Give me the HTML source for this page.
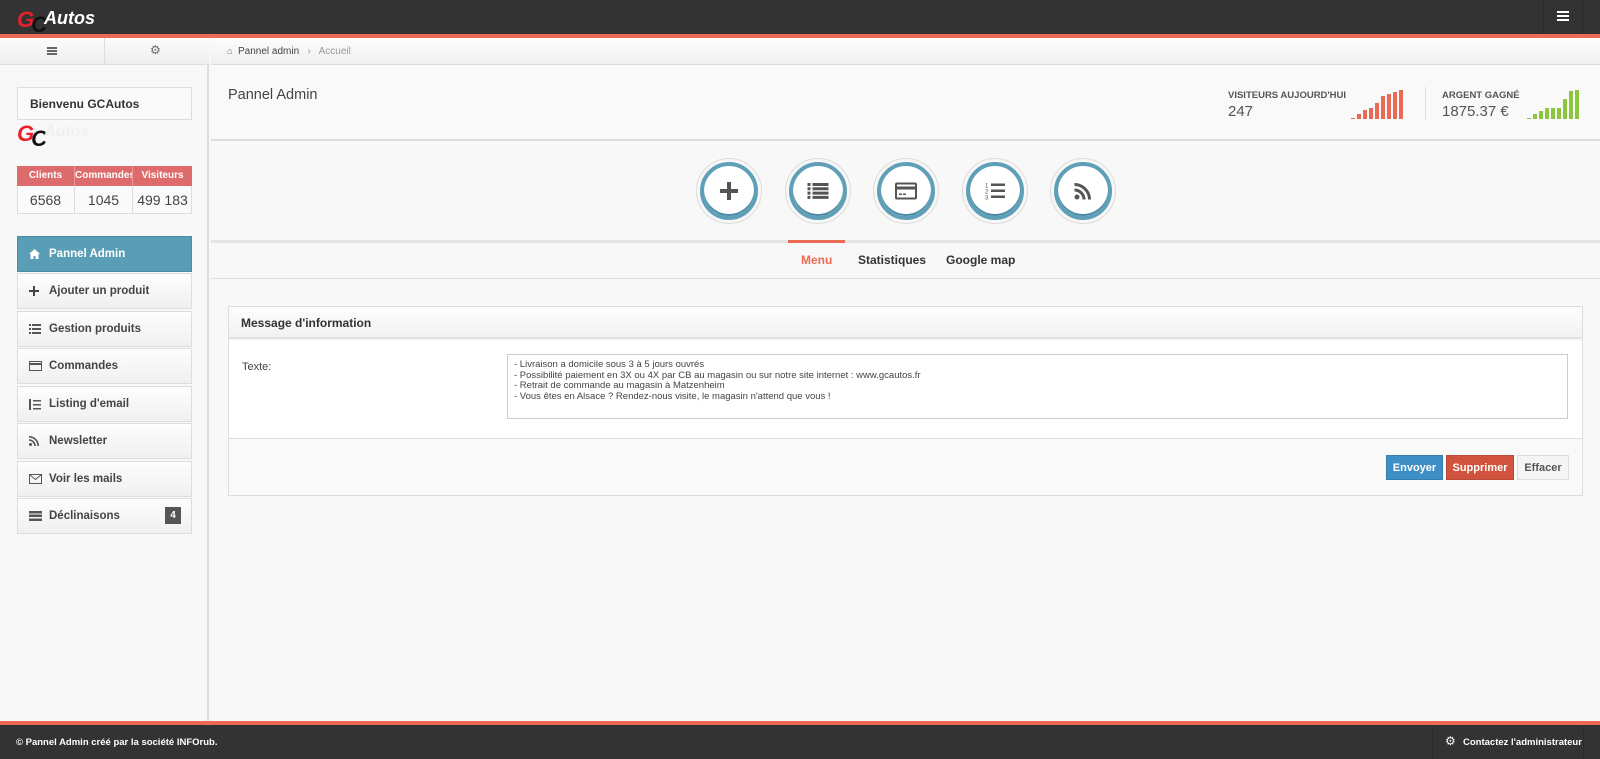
<!DOCTYPE html>
<html><head><meta charset="utf-8"><style>
*{box-sizing:border-box;margin:0;padding:0}
body{width:1600px;height:759px;overflow:hidden;background:#f8f8f8;font-family:"Liberation Sans",sans-serif;position:relative;color:#333}
.abs{position:absolute}
.top{left:0;top:0;width:1600px;height:34px;background:#333}
.red{background:#ea6a55}
.side{left:0;top:38px;width:209px;height:683px;background:#f8f8f8;border-right:2px solid #ddd}
.item{position:absolute;left:17px;width:175px;height:36px;background:linear-gradient(#fdfdfd,#f0f0f0);border:1px solid #ddd;font-size:11.5px;font-weight:bold;color:#444;padding:11px 0 0 31px}
.item svg{position:absolute;left:11px;top:12px}
.circ{position:absolute;top:158px;width:66px;height:66px;border-radius:50%;border:1px solid #ddd;background:#f7f7f7}
.circ div{position:absolute;left:3px;top:3px;width:58px;height:58px;border-radius:50%;border:4px solid #5f9fb8;background:#fff;box-shadow:inset 0 -2px 0 #4a8aa3}
.circ svg{position:absolute;left:50%;top:50%;transform:translate(-50%,-50%)}
.btn{position:absolute;top:455px;height:25px;font-size:11px;font-weight:bold;text-align:center;line-height:25px}
</style></head><body>
<div class="abs top"></div>
<div class="abs red" style="left:0;top:34px;width:1600px;height:4px"></div>
<div class="abs" style="left:17px;top:7px;font:italic bold 22px 'Liberation Sans',sans-serif;color:#e8202a;letter-spacing:-3px">G<span style="color:#111;position:relative;top:5px">C</span></div>
<div class="abs" style="left:44px;top:8px;font:italic bold 18px 'Liberation Sans',sans-serif;color:#fff">Autos</div>
<div class="abs" style="left:1543px;top:0;width:1px;height:34px;background:#2a2a2a"></div>
<div class="abs" style="left:1582px;top:0;width:1px;height:34px;background:#2a2a2a"></div>
<div class="abs" style="left:1557px;top:11px;width:12px;height:2px;background:#fff;box-shadow:0 4px 0 #fff,0 8px 0 #fff"></div>

<div class="abs side"></div>
<div class="abs" style="left:0;top:38px;width:209px;height:27px;background:linear-gradient(#fcfcfc,#eee);border-bottom:1px solid #ddd"></div>
<div class="abs" style="left:104px;top:38px;width:1px;height:27px;background:#ddd"></div>
<div class="abs" style="left:47px;top:47px;width:10px;height:1.5px;background:#666;box-shadow:0 3px 0 #666,0 6px 0 #666"></div>
<div class="abs" style="left:150px;top:43px;font-size:12px;color:#666">⚙</div>

<div class="abs" style="left:17px;top:87px;width:175px;height:33px;border:1px solid #ddd;background:#fafafa;font-size:12px;font-weight:bold;color:#333;padding:9px 0 0 12px">Bienvenu GCAutos</div>
<div class="abs" style="left:17px;top:121px;font:italic bold 22px 'Liberation Sans',sans-serif;color:#e8202a;letter-spacing:-3px">G<span style="color:#111;position:relative;top:5px">C</span></div>
<div class="abs" style="left:44px;top:123px;font:italic bold 16px 'Liberation Sans',sans-serif;color:#f0f0f0">Autos</div>

<div class="abs" style="left:17px;top:166px;width:175px;height:48px;border:1px solid #ddd;background:#fafafa"></div>
<div class="abs" style="left:17px;top:166px;width:175px;height:20px;background:#dd6b6b;color:#fff;font-size:10px;font-weight:bold;display:flex">
<div style="width:57px;text-align:center;line-height:20px">Clients</div><div style="width:58px;text-align:center;line-height:20px;border-left:1px solid #e99;overflow:hidden;white-space:nowrap">Commandes</div><div style="width:60px;text-align:center;line-height:20px;border-left:1px solid #e99">Visiteurs</div></div>
<div class="abs" style="left:17px;top:186px;width:175px;height:28px;display:flex;font-size:14px;color:#444">
<div style="width:57px;text-align:center;line-height:28px">6568</div><div style="width:58px;text-align:center;line-height:28px;border-left:1px solid #ddd">1045</div><div style="width:60px;text-align:center;line-height:28px;border-left:1px solid #ddd">499 183</div></div>

<div class="item" style="top:236px;background:#5a9db6;border-color:#4d8ca4;color:#fff"><svg width="11" height="10" viewBox="0 0 11 10"><path d="M5.5 0L0 5h1.5v5h3V7h2v3h3V5H11z" fill="#fff"/></svg>Pannel Admin</div>
<div class="item" style="top:273px"><svg width="10" height="10"><path d="M4 0h2v4h4v2H6v4H4V6H0V4h4z" fill="#444"/></svg>Ajouter un produit</div>
<div class="item" style="top:311px"><svg width="12" height="10"><path d="M0 0h2v2H0zM3 0h9v2H3zM0 4h2v2H0zM3 4h9v2H3zM0 8h2v2H0zM3 8h9v2H3z" fill="#555"/></svg>Gestion produits</div>
<div class="item" style="top:348px"><svg width="13" height="10"><rect x=".5" y=".5" width="12" height="9" fill="none" stroke="#555"/><rect x="0" y="2" width="13" height="2" fill="#555"/></svg>Commandes</div>
<div class="item" style="top:386px"><svg width="12" height="11"><path d="M0 0h2v11H0zM4 1h8v1.5H4zM4 5h8v1.5H4zM4 9h8v1.5H4z" fill="#555"/></svg>Listing d'email</div>
<div class="item" style="top:423px"><svg width="10" height="10"><circle cx="1.5" cy="8.5" r="1.5" fill="#555"/><path d="M0 4a6 6 0 0 1 6 6M0 0.8a9.2 9.2 0 0 1 9.2 9.2" stroke="#555" stroke-width="1.6" fill="none"/></svg>Newsletter</div>
<div class="item" style="top:461px"><svg width="13" height="10"><rect x=".5" y=".5" width="12" height="9" fill="none" stroke="#555"/><path d="M.5.5l6 5 6-5" fill="none" stroke="#555"/></svg>Voir les mails</div>
<div class="item" style="top:498px"><svg width="13" height="10"><path d="M0 0h13v2.5H0zM0 3.5h13V6H0zM0 7.5h13V10H0z" fill="#555"/></svg>Déclinaisons<span style="position:absolute;right:10px;top:8px;width:16px;height:17px;background:#555;color:#fff;font-size:10px;text-align:center;line-height:17px">4</span></div>

<!-- main -->
<div class="abs" style="left:211px;top:38px;width:1389px;height:27px;background:linear-gradient(#fcfcfc,#f0f0f0);border-bottom:1px solid #ddd;font-size:10px;color:#444;padding:8px 0 0 16px"><span style="font-size:9px;color:#666">⌂</span>&nbsp; Pannel admin &nbsp;&nbsp;<span style="color:#999">›&nbsp;&nbsp; Accueil</span></div>
<div class="abs" style="left:211px;top:65px;width:1389px;height:76px;background:#f9f9f9;border-bottom:2px solid #ddd"></div>
<div class="abs" style="left:228px;top:87px;font-size:14.5px;color:#444">Pannel Admin</div>
<div class="abs" style="left:1228px;top:90px;font-size:9.5px;font-weight:bold;color:#555">VISITEURS AUJOURD'HUI</div>
<div class="abs" style="left:1228px;top:103px;font-size:15px;color:#555">247</div>
<div class="abs" style="left:1351px;top:89px;display:flex;align-items:flex-end;gap:2px;height:30px">
<div style="width:4px;height:1px;background:#ea6a55"></div><div style="width:4px;height:5px;background:#ea6a55"></div><div style="width:4px;height:9px;background:#ea6a55"></div><div style="width:4px;height:11px;background:#ea6a55"></div><div style="width:4px;height:16px;background:#ea6a55"></div><div style="width:4px;height:23px;background:#ea6a55"></div><div style="width:4px;height:25px;background:#ea6a55"></div><div style="width:4px;height:27px;background:#ea6a55"></div><div style="width:4px;height:29px;background:#ea6a55"></div></div>
<div class="abs" style="left:1425px;top:87px;width:1px;height:33px;background:#ddd"></div>
<div class="abs" style="left:1442px;top:90px;font-size:9.5px;font-weight:bold;color:#555">ARGENT GAGNÉ</div>
<div class="abs" style="left:1442px;top:103px;font-size:15px;color:#555">1875.37 €</div>
<div class="abs" style="left:1527px;top:89px;display:flex;align-items:flex-end;gap:2px;height:30px">
<div style="width:4px;height:1px;background:#8cc63f"></div><div style="width:4px;height:5px;background:#8cc63f"></div><div style="width:4px;height:8px;background:#8cc63f"></div><div style="width:4px;height:11px;background:#8cc63f"></div><div style="width:4px;height:11px;background:#8cc63f"></div><div style="width:4px;height:11px;background:#8cc63f"></div><div style="width:4px;height:20px;background:#8cc63f"></div><div style="width:4px;height:28px;background:#8cc63f"></div><div style="width:4px;height:29px;background:#8cc63f"></div></div>

<div class="circ" style="left:696px"><div></div><svg width="18" height="18"><path d="M7 0h4v7h7v4h-7v7H7v-7H0V7h7z" fill="#555"/></svg></div>
<div class="circ" style="left:785px"><div></div><svg width="21" height="16"><path d="M0 0h3v3H0zM5 0h16v3H5zM0 4.3h3v3H0zM5 4.3h16v3H5zM0 8.6h3v3H0zM5 8.6h16v3H5zM0 12.9h3v3H0zM5 12.9h16v3H5z" fill="#555"/></svg></div>
<div class="circ" style="left:873px"><div></div><svg width="22" height="17"><rect x="1" y="1" width="20" height="15" rx="1" fill="none" stroke="#555" stroke-width="2"/><rect x="1" y="4" width="20" height="3" fill="#555"/><rect x="4" y="11" width="3" height="1.5" fill="#555"/><rect x="8" y="11" width="3" height="1.5" fill="#555"/></svg></div>
<div class="circ" style="left:962px"><div></div><svg width="20" height="19"><text x="0" y="6" font-size="6" fill="#555" font-family="Liberation Sans">1</text><text x="0" y="12" font-size="6" fill="#555" font-family="Liberation Sans">2</text><text x="0" y="18" font-size="6" fill="#555" font-family="Liberation Sans">3</text><path d="M6 2h14v2.5H6zM6 8h14v2.5H6zM6 14h14v2.5H6z" fill="#555"/></svg></div>
<div class="circ" style="left:1050px"><div></div><svg width="17" height="17"><circle cx="2.5" cy="14.5" r="2.5" fill="#555"/><path d="M0 7.5a9.5 9.5 0 0 1 9.5 9.5M0 2a15 15 0 0 1 15 15" stroke="#555" stroke-width="3" fill="none"/></svg></div>

<div class="abs" style="left:211px;top:240px;width:1389px;height:3px;background:#e5e5e5"></div>
<div class="abs" style="left:788px;top:240px;width:57px;height:3px;background:#ea6a55"></div>
<div class="abs" style="left:211px;top:278px;width:1389px;height:1px;background:#e0e0e0"></div>
<div class="abs" style="left:801px;top:253px;font-size:12px;font-weight:bold;color:#ea6a55">Menu</div>
<div class="abs" style="left:858px;top:253px;font-size:12px;font-weight:bold;color:#333">Statistiques</div>
<div class="abs" style="left:946px;top:253px;font-size:12px;font-weight:bold;color:#333">Google map</div>

<div class="abs" style="left:228px;top:306px;width:1355px;height:190px;border:1px solid #ddd;background:#f9f9f9"></div>
<div class="abs" style="left:229px;top:307px;width:1353px;height:32px;background:linear-gradient(#fdfdfd,#f2f2f2);border-bottom:2px solid #e2e2e2;font-size:12px;font-weight:bold;color:#333;padding:9px 0 0 12px">Message d'information</div>
<div class="abs" style="left:229px;top:341px;width:1353px;height:98px;background:#fff;border-bottom:1px solid #ddd"></div>
<div class="abs" style="left:242px;top:361px;font-size:11px;color:#444">Texte:</div>
<div class="abs" style="left:507px;top:354px;width:1061px;height:65px;border:1px solid #ccc;background:#fff;font-size:9.5px;line-height:10.5px;color:#444;padding:5px 0 0 6px">- Livraison a domicile sous 3 à 5 jours ouvrés<br>- Possibilité paiement en 3X ou 4X par CB au magasin ou sur notre site internet : www.gcautos.fr<br>- Retrait de commande au magasin à Matzenheim<br>- Vous êtes en Alsace ? Rendez-nous visite, le magasin n'attend que vous !</div>
<div class="btn" style="left:1386px;width:57px;background:#3d8fc6;color:#fff;border:1px solid #357fb0">Envoyer</div>
<div class="btn" style="left:1446px;width:68px;background:#d2533d;color:#fff;border:1px solid #b94a37">Supprimer</div>
<div class="btn" style="left:1517px;width:52px;background:#f5f5f5;color:#555;border:1px solid #ddd">Effacer</div>

<div class="abs red" style="left:0;top:721px;width:1600px;height:4px"></div>
<div class="abs" style="left:0;top:725px;width:1600px;height:34px;background:#333"></div>
<div class="abs" style="left:16px;top:737px;font-size:9.5px;font-weight:bold;color:#fff">© Pannel Admin créé par la société INFOrub.</div>
<div class="abs" style="left:1432px;top:725px;width:1px;height:34px;background:#2a2a2a"></div>
<div class="abs" style="left:1583px;top:725px;width:1px;height:34px;background:#2a2a2a"></div>
<div class="abs" style="left:1445px;top:734px;font-size:12px;color:#fff">⚙</div>
<div class="abs" style="left:1463px;top:737px;font-size:9.5px;font-weight:bold;color:#fff">Contactez l'administrateur</div>
</body></html>
